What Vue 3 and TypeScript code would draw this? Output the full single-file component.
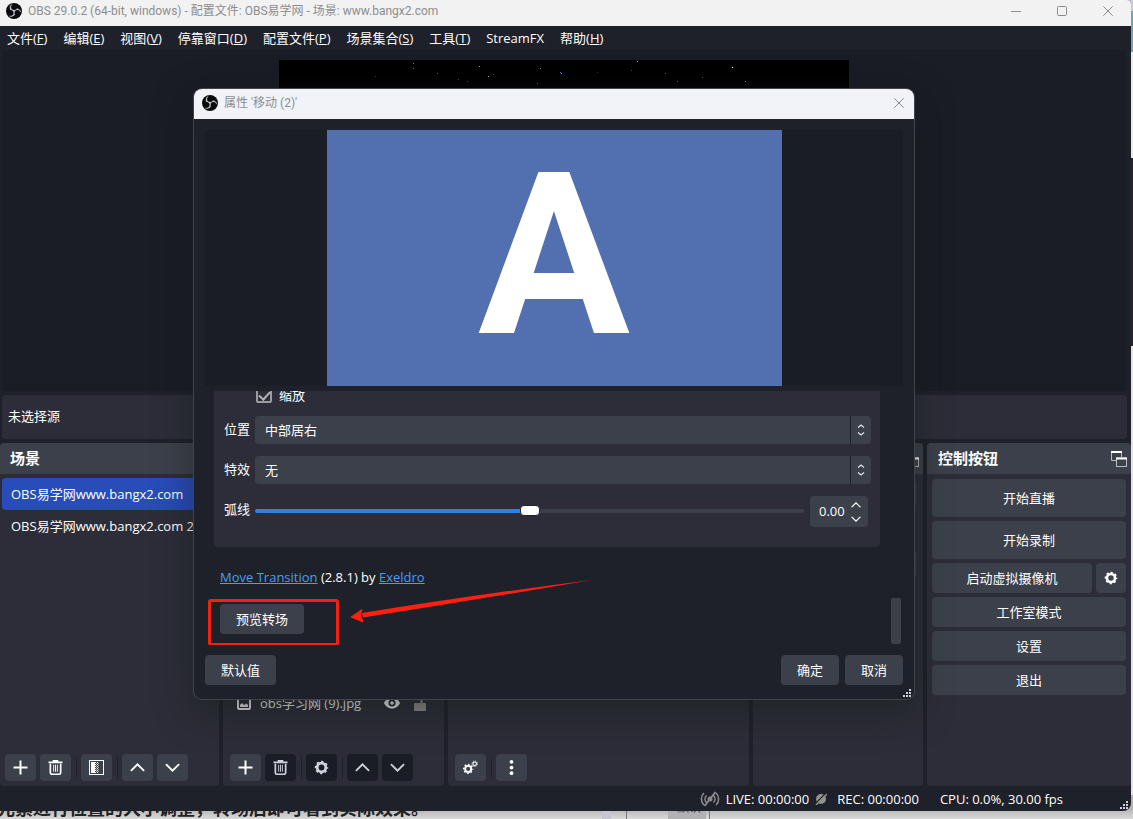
<script setup lang="ts">
import { ref } from 'vue'

interface MenuEntry { label: string; key?: string }
interface Star { x: number; y: number; c: string }

const menus: MenuEntry[] = [
  { label: '文件', key: 'F' },
  { label: '编辑', key: 'E' },
  { label: '视图', key: 'V' },
  { label: '停靠窗口', key: 'D' },
  { label: '配置文件', key: 'P' },
  { label: '场景集合', key: 'S' },
  { label: '工具', key: 'T' },
  { label: 'StreamFX' },
  { label: '帮助', key: 'H' },
]

const scenes: string[] = ['OBS易学网www.bangx2.com', 'OBS易学网www.bangx2.com 2']
const selectedScene = ref(0)

const stars: Star[] = [
  { x: 134, y: 3, c: '#777' }, { x: 134, y: 8, c: '#666' }, { x: 158, y: 13, c: '#555' },
  { x: 200, y: 6, c: '#999' }, { x: 209, y: 16, c: '#bbb' }, { x: 214, y: 14, c: '#555' },
  { x: 261, y: 8, c: '#888' }, { x: 281, y: 12, c: '#5068ff' }, { x: 282, y: 13, c: '#8aa' },
  { x: 318, y: 12, c: '#2018b0' }, { x: 358, y: 1, c: '#999' }, { x: 352, y: 10, c: '#444' },
  { x: 386, y: 13, c: '#555' }, { x: 398, y: 21, c: '#555' }, { x: 453, y: 7, c: '#fff' },
  { x: 466, y: 21, c: '#999' }, { x: 423, y: 17, c: '#555' }, { x: 96, y: 16, c: '#333' },
  { x: 258, y: 23, c: '#666' }, { x: 179, y: 19, c: '#444' }, { x: 188, y: 21, c: '#444' },
]

const swirl =
  'M6.182 5.99c.352-1.698 1.503-3.229 3.05-3.996-.269.273-.595.483-.844.78-1.02 1.1-1.48 2.692-1.199 4.156.355 2.235 2.455 4.06 4.732 4.028 1.765.079 3.485-.937 4.348-2.468 1.848.063 3.645 1.017 4.7 2.548.54.799.962 1.736.991 2.711-.342-1.295-1.202-2.446-2.375-3.095-1.135-.639-2.529-.802-3.772-.425-1.56.448-2.849 1.723-3.293 3.293-.377 1.25-.216 2.628.377 3.772-.825 1.429-2.315 2.449-3.932 2.756-1.244.261-2.551.059-3.709-.464 1.036.302 2.161.355 3.191-.011 1.381-.457 2.522-1.567 3.024-2.935.556-1.49.345-3.261-.591-4.54-.7-1.007-1.803-1.717-3.002-1.969-.38-.068-.764-.098-1.148-.134-.611-1.231-.834-2.66-.528-3.996z'

const scaleOn = ref(true)
const position = ref('中部居右')
const effect = ref('无')
const curve = ref(0)
</script>

<template>
  <div class="desktop">
    <div class="article">
      <p class="article-text">元素进行位置的大小调整，转场后即可看到实际效果。</p>
      <div class="article-side"><span class="chip">默认</span></div>
    </div>

    <svg class="defs" width="0" height="0" aria-hidden="true">
      <defs>
        <symbol id="i-obs" viewBox="0 0 24 24">
          <circle cx="12" cy="12" r="12" fill="#0a0a0c" />
          <path :d="swirl" fill="#e6e6ea" stroke="#e6e6ea" stroke-width="0.6" />
        </symbol>
        <symbol id="i-plus" viewBox="0 0 15 15">
          <path d="M7.500 0.500v14M0.500 7.500h14" stroke="currentColor" stroke-width="2" fill="none" />
        </symbol>
        <symbol id="i-trash" viewBox="0 0 16 16">
          <path d="M0.500 2.500h15M5 1h6" stroke="currentColor" stroke-width="1.8" fill="none" />
          <path d="M2.500 4v9.200a2 2 0 0 0 2 2h7a2 2 0 0 0 2-2V4" stroke="currentColor" stroke-width="1.8" fill="none" />
          <path d="M6 5v7.500M8 5v7.500M10 5v7.500" stroke="currentColor" stroke-width="1" fill="none" />
        </symbol>
        <symbol id="i-filter" viewBox="0 0 15 15">
          <rect x="0.500" y="0.500" width="14" height="14" stroke="currentColor" fill="none" />
          <rect x="2" y="2" width="4" height="11" fill="currentColor" />
          <path d="M6.500 2v11M8.500 2v11" stroke="currentColor" stroke-dasharray="1 1" />
          <path d="M7.500 3v10M9.500 3v10" stroke="currentColor" stroke-dasharray="1 1" opacity="0.6" />
        </symbol>
        <symbol id="i-up" viewBox="0 0 16 16">
          <path d="M1.500 11L8 4.500l6.500 6.500" stroke="currentColor" stroke-width="2" fill="none" stroke-linecap="round" />
        </symbol>
        <symbol id="i-down" viewBox="0 0 16 16">
          <path d="M1.500 5L8 11.500L14.500 5" stroke="currentColor" stroke-width="2" fill="none" stroke-linecap="round" />
        </symbol>
        <symbol id="i-gear" viewBox="0 0 16 16">
          <circle cx="8" cy="8" r="4.600" stroke="currentColor" stroke-width="3" fill="none" />
          <circle cx="8" cy="8" r="6.300" stroke="currentColor" stroke-width="1.800" fill="none" stroke-dasharray="2.500 2.448" stroke-dashoffset="1.250" />
        </symbol>
        <symbol id="i-gears" viewBox="0 0 16 16">
          <circle cx="5.500" cy="9.500" r="3.200" stroke="currentColor" stroke-width="2" fill="none" />
          <circle cx="5.500" cy="9.500" r="4.700" stroke="currentColor" stroke-width="1.600" fill="none" stroke-dasharray="1.800 1.891" stroke-dashoffset="0.900" />
          <circle cx="12.500" cy="4" r="1.900" stroke="currentColor" stroke-width="1.200" fill="none" />
          <circle cx="12.500" cy="4" r="2.900" stroke="currentColor" stroke-width="1" fill="none" stroke-dasharray="1.100 1.177" />
        </symbol>
        <symbol id="i-dots" viewBox="0 0 16 16">
          <circle cx="8" cy="2" r="2" fill="currentColor" />
          <circle cx="8" cy="8" r="2" fill="currentColor" />
          <circle cx="8" cy="14" r="2" fill="currentColor" />
        </symbol>
        <symbol id="i-pop" viewBox="0 0 16 16">
          <path d="M5 9.500H0.500V1h10v5" stroke="#b9bbc2" stroke-width="1" fill="none" />
          <path d="M0 1h11" stroke="#fff" stroke-width="2" />
          <rect x="5.500" y="7" width="10" height="8.500" stroke="#b9bbc2" fill="none" />
          <path d="M5 7.500h11" stroke="#fff" stroke-width="2" />
        </symbol>
        <symbol id="i-grip" viewBox="0 0 8 8">
          <path d="M6 0h2v2H6zM6 3h2v2H6zM3 3h2v2H3zM6 6h2v2H6zM3 6h2v2H3zM0 6h2v2H0z" fill="#d0d1d4" />
        </symbol>
        <symbol id="i-close" viewBox="0 0 10 10">
          <path d="M0.300 0.300l9.400 9.400M9.700 0.300L0.300 9.700" stroke="#8a8a8c" stroke-width="1" />
        </symbol>
      </defs>
    </svg>

    <main class="window">
      <header class="titlebar">
        <svg class="logo"><use href="#i-obs" /></svg>
        <span class="title">OBS 29.0.2 (64-bit, windows) - 配置文件: OBS易学网 - 场景: www.bangx2.com</span>
        <button class="win-btn" aria-label="最小化">
          <svg width="10" height="10"><path d="M0 5.500h10" stroke="#8a8a8c" /></svg>
        </button>
        <button class="win-btn" aria-label="最大化">
          <svg width="10" height="10"><rect x="0.500" y="0.500" width="9" height="9" rx="1" fill="none" stroke="#8a8a8c" /></svg>
        </button>
        <button class="win-btn" aria-label="关闭">
          <svg width="10" height="10"><use href="#i-close" /></svg>
        </button>
      </header>

      <nav class="menubar">
        <button v-for="m in menus" :key="m.label" class="menu">{{ m.label }}<template v-if="m.key">(<u>{{ m.key }}</u>)</template></button>
      </nav>

      <section class="canvas">
        <svg class="canvas-view" viewBox="0 0 570 321">
          <rect width="570" height="321" fill="#000" />
          <rect v-for="(s, i) in stars" :key="i" :x="s.x" :y="s.y" width="1" height="1" :fill="s.c" />
        </svg>
      </section>

      <section class="context">未选择源</section>

      <div class="docks">
        <section class="dock">
          <h2 class="dock-title">场景</h2>
          <ul class="scenes">
            <li v-for="(s, i) in scenes" :key="s">
              <button class="scene" :class="{ on: i === selectedScene }" @click="selectedScene = i">{{ s }}</button>
            </li>
          </ul>
          <div class="tools first">
            <button class="tool" aria-label="添加场景"><svg><use href="#i-plus" /></svg></button>
            <button class="tool" aria-label="删除场景"><svg><use href="#i-trash" /></svg></button>
            <i class="sep"></i>
            <button class="tool" aria-label="场景滤镜"><svg><use href="#i-filter" /></svg></button>
            <i class="sep"></i>
            <button class="tool" aria-label="上移场景"><svg><use href="#i-up" /></svg></button>
            <button class="tool" aria-label="下移场景"><svg><use href="#i-down" /></svg></button>
          </div>
        </section>

        <section class="dock">
          <div class="dock-title"></div>
          <ul class="sources">
            <li class="source">
              <svg class="s14" viewBox="0 0 14 14">
                <rect x="1" y="1" width="12" height="12" rx="1.500" fill="none" stroke="#e4e5e8" stroke-width="2" />
                <path d="M3 11V9l2-2 2 2 2.500-1.500L11 9v2z" fill="#e4e5e8" />
              </svg>
              <span class="source-name">obs学习网 (9).jpg</span>
              <svg class="eye" viewBox="0 0 16 12">
                <path d="M0 6C2 2 5 0.500 8 0.500S14 2 16 6c-2 4-5 5.500-8 5.500S2 10 0 6z" fill="#e8e9eb" />
                <circle cx="8" cy="6" r="3.600" fill="#262932" />
                <circle cx="8" cy="6" r="1.800" fill="#e8e9eb" />
              </svg>
              <svg class="lock" viewBox="0 0 14 16">
                <path d="M8.500 8V4a2.500 2.500 0 0 0-5 0" fill="none" stroke="#8b8a87" stroke-width="2" />
                <rect x="1" y="8" width="12" height="8" rx="1" fill="#8b8a87" />
              </svg>
            </li>
          </ul>
          <div class="tools">
            <button class="tool" aria-label="添加源"><svg><use href="#i-plus" /></svg></button>
            <button class="tool" disabled aria-label="删除源"><svg><use href="#i-trash" /></svg></button>
            <i class="sep"></i>
            <button class="tool" disabled aria-label="源属性"><svg><use href="#i-gear" /></svg></button>
            <i class="sep"></i>
            <button class="tool" disabled aria-label="上移源"><svg><use href="#i-up" /></svg></button>
            <button class="tool" disabled aria-label="下移源"><svg><use href="#i-down" /></svg></button>
          </div>
        </section>

        <section class="dock">
          <div class="dock-title"></div>
          <div class="fill"></div>
          <div class="tools">
            <button class="tool" aria-label="高级音频属性"><svg><use href="#i-gears" /></svg></button>
            <i class="sep"></i>
            <button class="tool" aria-label="更多"><svg><use href="#i-dots" /></svg></button>
          </div>
        </section>

        <section class="dock">
          <div class="dock-title"><svg class="pop"><use href="#i-pop" /></svg></div>
          <div class="fields">
            <div class="field"></div>
            <div class="field low"></div>
          </div>
        </section>

        <section class="dock">
          <h2 class="dock-title controls-title">控制按钮<svg class="pop"><use href="#i-pop" /></svg></h2>
          <div class="controls">
            <button class="btn tall">开始直播</button>
            <button class="btn tall">开始录制</button>
            <div class="pair">
              <button class="btn grow">启动虚拟摄像机</button>
              <button class="btn square" aria-label="虚拟摄像机设置"><svg class="s14"><use href="#i-gear" /></svg></button>
            </div>
            <button class="btn">工作室模式</button>
            <button class="btn">设置</button>
            <button class="btn">退出</button>
          </div>
        </section>
      </div>

      <footer class="status">
        <svg class="live-icon" viewBox="0 0 20 16">
          <g fill="none" stroke="#8b8c8e" stroke-width="1.600">
            <path d="M4 2C0.500 5 0.500 11 4 14M6.500 4.500c-2 2-2 5 0 7M16 2c3.500 3 3.500 9 0 12M13.500 4.500c2 2 2 5 0 7" />
            <path d="M4.500 15L15.500 1" stroke-width="2" />
          </g>
          <circle cx="10" cy="8" r="2.500" fill="#8b8c8e" />
        </svg>
        <span class="live">LIVE: 00:00:00</span>
        <svg class="rec-icon" viewBox="0 0 12 12">
          <circle cx="6" cy="6" r="5" fill="#92938f" />
          <path d="M0 11L11 0" stroke="#1f212a" stroke-width="1.200" />
          <path d="M1 12L12 1" stroke="#92938f" stroke-width="1.400" />
        </svg>
        <span class="rec">REC: 00:00:00</span>
        <span class="cpu">CPU: 0.0%, 30.00 fps</span>
        <svg class="grip"><use href="#i-grip" /></svg>
      </footer>
    </main>

    <div class="dialog" role="dialog" aria-labelledby="dlg-title">
      <header class="dlg-bar">
        <svg class="logo"><use href="#i-obs" /></svg>
        <span id="dlg-title" class="title">属性 '移动 (2)'</span>
        <button class="dlg-close" aria-label="关闭"><svg width="10" height="10"><use href="#i-close" /></svg></button>
      </header>

      <div class="dlg-body">
        <div class="stage"><div class="stage-view">A</div></div>

        <div class="scroll">
          <div class="group">
            <div class="check-row">
              <input id="scale" v-model="scaleOn" type="checkbox" class="check" />
              <label for="scale">缩放</label>
            </div>
            <div class="row">
              <label for="pos">位置</label>
              <div class="combo">
                <select id="pos" v-model="position"><option>中部居右</option></select>
                <span class="combo-arrow">
                  <svg width="8" height="12" viewBox="0 0 8 12"><path d="M1 3.500L4 1l3 2.500M1 8.500L4 11l3-2.500" fill="none" stroke="#e2e3e6" stroke-width="1.200" /></svg>
                </span>
              </div>
            </div>
            <div class="row">
              <label for="fx">特效</label>
              <div class="combo">
                <select id="fx" v-model="effect"><option>无</option></select>
                <span class="combo-arrow">
                  <svg width="8" height="12" viewBox="0 0 8 12"><path d="M1 3.500L4 1l3 2.500M1 8.500L4 11l3-2.500" fill="none" stroke="#e2e3e6" stroke-width="1.200" /></svg>
                </span>
              </div>
            </div>
            <div class="row curve">
              <label for="curve">弧线</label>
              <input id="curve" v-model.number="curve" class="range" type="range" min="-100" max="100" />
              <div class="spin">
                <input aria-label="弧线" type="text" :value="(curve / 100).toFixed(2)" />
                <div class="spin-btns">
                  <button aria-label="增加" @click="curve++"><svg viewBox="0 0 16 16"><use href="#i-up" /></svg></button>
                  <button aria-label="减少" @click="curve--"><svg viewBox="0 0 16 16"><use href="#i-down" /></svg></button>
                </div>
              </div>
            </div>
          </div>
          <p class="credit"><a href="#move">Move Transition</a> (2.8.1) by <a href="#exeldro">Exeldro</a></p>
          <div class="preview-row">
            <button class="btn">预览转场</button>
            <span class="mark"></span>
            <svg class="arrow" viewBox="0 0 244 44">
              <path d="M241 1Q130 15 11 34L12 38.500Q130 20 241 1z" fill="#ff2010" />
              <path d="M0 38L11 30.500L9.500 36L12 43z" fill="#ff2010" stroke="#ff2010" stroke-width="1" />
            </svg>
          </div>
          <i class="thumb"></i>
        </div>

        <footer class="dlg-foot">
          <button class="btn reset">默认值</button>
          <button class="btn">确定</button>
          <button class="btn">取消</button>
        </footer>
      </div>
      <svg class="grip dlg-grip"><use href="#i-grip" /></svg>
    </div>
  </div>
</template>

<style>
html, body { background: #d4d4d4; }
</style>

<style scoped>
.desktop, .desktop * { box-sizing: border-box; }
.desktop {
  position: relative;
  height: 100vh;
  min-height: 700px;
  overflow: hidden;
  display: flex;
  flex-direction: column;
  justify-content: flex-end;
  background: linear-gradient(to bottom, #c9cad8 0 11px, #6aa9b0 11px 52px, #e8ecee 52px 158px, #2a2230 158px 346px, #e4e4e6 346px);
  color: #fefefe;
  font: 13px/18px "Open Sans", "Noto Sans CJK SC", sans-serif;
}
.defs { position: absolute; }
button, input, select { font: inherit; color: inherit; border: 0; padding: 0; margin: 0; background: none; }
p, ul, h2 { margin: 0; padding: 0; list-style: none; }
svg { display: block; flex: none; width: 15px; height: 15px; }

/* page behind the windows */
.article { display: flex; height: 24px; background: linear-gradient(#b4b4b4 14px, #dadada); color: #222; overflow: hidden; }
.article-text { flex: 0 0 614px; margin-left: -3px; font-size: 18px; line-height: 26px; font-weight: 700; white-space: nowrap; border-right: 9px solid #c6c6d0; }
.article-side { flex: 1; border-left: 1px solid #777; margin-left: 15px; }
.chip { display: block; width: 83px; padding-left: 50px; background: linear-gradient(to right, transparent 41px, #b2b2b4 41px 79px, transparent 79px); color: #555; font-size: 12px; line-height: 26px; border-right: 1px solid #777; }

/* main window */
.window {
  position: absolute;
  inset: 0 2px 8px 0;
  display: flex;
  flex-direction: column;
  background: #1f212a;
  border-radius: 0 4px 8px 0;
  overflow: hidden;
}
.titlebar { display: flex; height: 26px; padding: 0 0 4px 6px; align-items: center; background: #f2f2f2; flex: none; }
.logo { width: 16px; height: 16px; }
.title { flex: 1; margin-left: 6px; font: 12px/18px Roboto, "Noto Sans CJK SC", sans-serif; color: #8d8d8f; white-space: nowrap; }
.win-btn { display: flex; width: 46px; height: 22px; align-items: center; justify-content: center; }
.win-btn svg, .dlg-close svg { width: 10px; height: 10px; }
.menubar { display: flex; flex: none; height: 24px; padding: 3px 0 0 7px; gap: 16px; align-items: flex-start; }
.menu { white-space: nowrap; }
.canvas { flex: 1; margin: 0 5px 4px 2px; padding-top: 10px; min-height: 0; background: #1a1c26; overflow: hidden; }
.canvas-view { width: 570px; height: 321px; margin: 0 auto; }
.context { flex: none; height: 44px; margin: 0 4px 4px 2px; padding-left: 6px; line-height: 42px; background: #2c2d38; border-radius: 4px; }

.docks { display: grid; flex: none; height: 343px; gap: 4px; grid-template-columns: 219fr 221fr 301fr 170fr 204fr; }
.dock { display: flex; flex-direction: column; min-width: 0; background: #2c2d38; border-radius: 4px; }
.dock-title {
  display: flex; flex: none; height: 31px; padding: 0 4px 0 10px; align-items: center; justify-content: space-between;
  background: #3c404a; border-radius: 4px 4px 0 0; font-size: 15px; line-height: 21px; font-weight: 700;
}
.controls-title { padding-left: 11px; }
.pop { width: 16px; height: 16px; }
.dock-title .pop:only-child { margin-left: auto; }
.scenes { flex: 1; padding: 4px 2px; }
.scene { display: block; width: 100%; height: 32px; padding-left: 9px; text-align: left; white-space: nowrap; border-radius: 4px; }
.scene.on { background: #284cb8; }
.tools { display: flex; flex: none; gap: 4px; padding: 0 7px 5px; }
.tools.first { padding-left: 5px; }
.tool { display: flex; width: 31px; height: 27px; align-items: center; justify-content: center; background: #3c404a; border-radius: 4px; }
.tool:disabled { background: #1a1c26; color: #cfd1de; }
.s14 { width: 14px; height: 14px; }
.sep { width: 2px; height: 21px; margin-top: 3px; border-right: 1px solid #1f212a; }
.sources { display: flex; flex: 1; flex-direction: column; justify-content: flex-end; padding: 0 17px 37px 14px; }
.source { display: flex; height: 28px; align-items: center; color: #e4e5e8; }
.source-name { flex: 1; margin-left: 9px; white-space: nowrap; }
.eye { width: 16px; height: 12px; margin-right: 13px; }
.lock { width: 14px; height: 16px; }
.fill { flex: 1; }
.fields { padding: 6px 7px; }
.field { height: 27px; background: #3c404a; border-radius: 4px; }
.field.low { margin-top: 43px; }
.controls { display: flex; flex-direction: column; gap: 4px; padding: 5px; }
.pair { display: flex; gap: 4px; }
.btn { height: 30px; padding: 0 16px; background: #3c404a; border-radius: 4px; white-space: nowrap; }
.btn.tall { height: 38px; }
.btn.grow { flex: 1; }
.btn.square { display: flex; width: 30px; padding: 0; align-items: center; justify-content: center; }

.status { display: flex; flex: none; height: 25px; padding-right: 3px; align-items: center; justify-content: flex-end; white-space: nowrap; }
.live-icon { width: 20px; height: 16px; margin-right: 6px; }
.rec-icon { width: 12px; height: 12px; margin: 0 10px 0 6px; }
.cpu { margin: 0 57px 0 21px; }
.grip { width: 8px; height: 8px; align-self: flex-end; margin-bottom: 2px; }

/* properties dialog */
.dialog {
  position: absolute;
  inset: 89px 219px 120px 194px;
  display: flex;
  flex-direction: column;
  background: #1f212a;
  border-radius: 8px;
  box-shadow: 0 0 0 1px #42444b, 0 12px 36px rgba(22, 26, 24, 0.5);
}
.dlg-bar { display: flex; flex: none; height: 30px; padding: 0 0 2px 8px; align-items: center; background: #f1f3f8; border-radius: 8px 8px 0 0; }
.dlg-close { display: flex; width: 30px; height: 28px; align-items: center; justify-content: center; }
.dlg-body { display: flex; flex: 1; flex-direction: column; min-height: 0; padding: 11px 11px 14px; }
.stage { display: flex; flex: none; height: 256px; justify-content: center; background: #1a1c26; }
.stage-view {
  width: 455px; background: #526fb0; color: #fff; text-align: center;
  font: 700 226px/251px Roboto, "Liberation Sans", sans-serif;
}
.scroll { position: relative; display: flex; flex: 1; min-height: 0; flex-direction: column; justify-content: flex-end; margin-top: 5px; overflow: hidden; }
.group { display: flex; flex: none; flex-direction: column; gap: 12px; margin: 0 23px 0 9px; padding: 0 9px 20px 10px; background: #2c2d38; border-radius: 4px; }
.check-row { display: flex; height: 18px; align-items: center; padding-left: 32px; gap: 7px; }
.check { appearance: none; display: flex; width: 16px; height: 16px; justify-content: center; border: 2px solid #9b9ca1; border-radius: 2px; }
.check:checked::before { content: ""; width: 5px; height: 9px; border: solid #b3b4b8; border-width: 0 2px 2px 0; transform: rotate(42deg); }
.row { display: flex; align-items: flex-start; }
.row > label { flex: 0 0 31px; line-height: 26px; }
.combo { position: relative; display: flex; flex: 1; height: 28px; background: #3c404a; border-radius: 4px; }
.combo select { appearance: none; flex: 1; padding: 0 30px 0 10px; outline: 0; }
.combo-arrow { position: absolute; inset: 0 0 0 auto; width: 21px; display: flex; align-items: center; justify-content: center; border-left: 1px solid #1f212a; pointer-events: none; }
.combo-arrow svg { width: 8px; height: 12px; }
.row.curve { padding-right: 3px; }
.range { appearance: none; flex: 1; min-width: 0; height: 30px; margin-right: 6px; }
.range::-webkit-slider-runnable-track { height: 4px; border-radius: 2px; background: linear-gradient(to right, #2d82df 50%, #3c404a 50%); }
.range::-webkit-slider-thumb { appearance: none; width: 20px; height: 11px; margin-top: -4px; background: #fff; border: 1px solid #1f212a; border-radius: 4px; }
.spin { display: flex; width: 58px; height: 31px; background: #3c404a; border-radius: 4px; }
.spin input { width: 36px; padding: 0 0 1px 9px; flex: none; }
.spin-btns { display: flex; flex: 1; flex-direction: column; justify-content: center; gap: 4px; padding-left: 5px; }
.spin-btns button, .spin-btns svg { width: 10px; height: 10px; }
.credit { flex: none; margin: 20px 0 0 15px; line-height: 20px; }
.credit a { color: #4a9df5; text-decoration: underline; }
.preview-row { position: relative; flex: none; margin: 17px 0 11px 15px; }
.preview-row .btn { display: block; }
.mark { position: absolute; inset: -5px auto -12px -12px; width: 131px; border: 3px solid #f5200f; border-radius: 3px; }
.arrow { position: absolute; left: 131px; top: -25px; width: 244px; height: 44px; }
.thumb { position: absolute; right: 2px; bottom: 1px; width: 10px; height: 46px; background: #3c404a; border-radius: 2px; }
.dlg-foot { display: flex; flex: none; gap: 6px; padding-top: 10px; }
.reset { margin-right: auto; }
.dlg-grip { position: absolute; right: 3px; bottom: 0; }
</style>
